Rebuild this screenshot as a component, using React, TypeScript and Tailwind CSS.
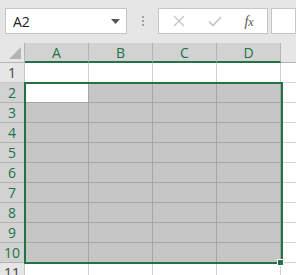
import React from 'react';

const cols = ['A', 'B', 'C', 'D'];
const rows = [1, 2, 3, 4, 5, 6, 7, 8, 9, 10, 11];

const isSel = (r: number) => r >= 2 && r <= 10;

const App: React.FC = () => {
  return (
    <div className="w-[296px] h-[275px] overflow-hidden bg-[#e6e6e6] text-[#444]" style={{ fontFamily: '"Open Sans", "Noto Sans", sans-serif' }}>
      {/* formula bar */}
      <div className="h-[43px] flex items-start pt-[8px] pl-[5px]">
        <div className="w-[122px] h-[26px] bg-white border border-[#c6c6c6] flex items-center justify-between pl-[7px] pr-[6px]">
          <span className="text-[14px] text-[#222]">A2</span>
          <svg width="9" height="5" viewBox="0 0 9 5"><path d="M0 0h9L4.5 5z" fill="#555" /></svg>
        </div>
        <div className="w-[31px] h-[26px] flex flex-col items-center justify-center gap-[2px]">
          <div className="w-[2px] h-[2px] bg-[#a0a0a0]" />
          <div className="w-[2px] h-[2px] bg-[#a0a0a0]" />
          <div className="w-[2px] h-[2px] bg-[#a0a0a0]" />
        </div>
        <div className="w-[110px] h-[26px] bg-white border border-[#c6c6c6] flex items-center">
          <div className="w-[40px] flex justify-center">
            <svg width="12" height="12" viewBox="0 0 12 12"><path d="M1 1l10 10M11 1L1 11" stroke="#c4c4c4" strokeWidth="1.3" /></svg>
          </div>
          <div className="w-[32px] flex justify-center">
            <svg width="14" height="11" viewBox="0 0 14 11"><path d="M1 5.5l4 4L13 1" stroke="#c4c4c4" strokeWidth="1.6" fill="none" /></svg>
          </div>
          <div className="w-[36px] flex justify-center">
            <span className="text-[14px] italic text-[#555]" style={{ fontFamily: '"Liberation Serif", serif' }}>
              f<span className="text-[12px]">x</span>
            </span>
          </div>
        </div>
        <div className="ml-[3px] flex-1 h-[26px] bg-white border border-[#c6c6c6]" />
      </div>

      {/* grid */}
      <div className="relative bg-white">
        {/* header row */}
        <div className="flex h-[20px]">
          <div className="w-[25px] h-full bg-[#e6e6e6] border-r border-b border-[#b4b4b4] relative">
            <svg className="absolute right-[3px] bottom-[3px]" width="12" height="12" viewBox="0 0 12 12"><path d="M12 0v12H0z" fill="#b4b4b4" /></svg>
          </div>
          {cols.map((c) => (
            <div key={c} className="w-[64px] h-full bg-[#d2d2d2] border-r border-[#b4b4b4] border-b-2 border-b-[#217346] flex items-center justify-center text-[14px] text-[#217346]">
              {c}
            </div>
          ))}
          <div className="flex-1 h-full bg-[#e6e6e6] border-b border-[#b4b4b4]" />
        </div>

        {rows.map((r) => (
          <div key={r} className="flex h-[20px]">
            <div
              className={`w-[25px] h-full border-b border-r flex items-center justify-center text-[14px] ${
                isSel(r) ? 'bg-[#d2d2d2] text-[#217346] border-b-[#b4b4b4] border-r-[#217346]' : 'bg-[#e6e6e6] text-[#444] border-[#c6c6c6]'
              }`}
            >
              {r}
            </div>
            {cols.map((c) => {
              const active = r === 2 && c === 'A';
              const sel = isSel(r) && !active;
              return (
                <div
                  key={c}
                  className={`w-[64px] h-full border-r border-b ${
                    active ? 'bg-white border-[#a6a6a6]' : sel ? 'bg-[#c6c6c6] border-[#a6a6a6]' : 'bg-white border-[#d4d4d4]'
                  }`}
                />
              );
            })}
            <div className="flex-1 h-full bg-white border-b border-[#d4d4d4]" />
          </div>
        ))}

        {/* selection outline */}
        <div className="absolute left-[24px] top-[39px] w-[259px] h-[182px] border-2 border-[#217346] pointer-events-none" />
        <div className="absolute left-[277px] top-[216px] w-[7px] h-[7px] bg-[#217346] border border-white" />
      </div>
    </div>
  );
};

export default App;
